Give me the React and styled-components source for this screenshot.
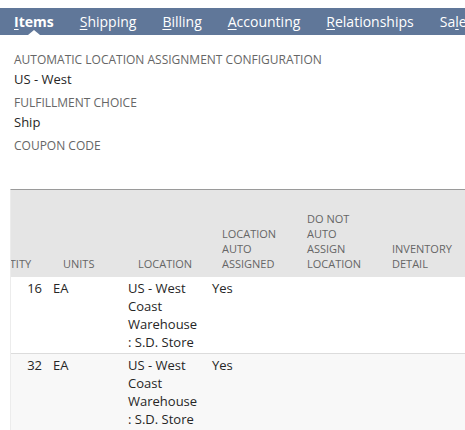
import React from 'react';
import styled, { createGlobalStyle } from 'styled-components';

const GlobalStyle = createGlobalStyle`
  html, body {
    margin: 0;
    padding: 0;
    background: #fff;
  }
  body {
    font-family: "Open Sans", Arial, sans-serif;
    color: #333;
  }
`;

const Page = styled.div`
  padding-top: 8px;
  width: 465px;
  height: 430px;
  overflow: hidden;
  box-sizing: border-box;
`;

const TabBar = styled.div`
  background-color: #607799;
  display: flex;
  height: 27px;
  padding-left: 1px;
  white-space: nowrap;
  overflow: hidden;
`;

const Tab = styled.div`
  color: #fff;
  font-size: 14px;
  font-weight: ${({ active }) => (active ? 700 : 400)};
  line-height: 27px;
  padding: 0 13px;
  position: relative;
  flex-shrink: 0;

  u {
    text-decoration-thickness: 1px;
    text-underline-offset: 2px;
  }

  &:after {
    content: '';
    display: ${({ active }) => (active ? 'block' : 'none')};
    position: absolute;
    left: 50%;
    bottom: 0;
    margin-left: -6px;
    border-left: 6px solid transparent;
    border-right: 6px solid transparent;
    border-bottom: 5px solid #fff;
  }
`;

const Fields = styled.div`
  padding: 17px 14px 0;
  height: 136px;
  box-sizing: border-box;
`;

const Field = styled.div`
  margin-bottom: 7px;
`;

const Label = styled.div`
  color: #666;
  font-size: 12px;
  line-height: 16px;
  text-transform: uppercase;
  margin-bottom: 2px;
`;

const Value = styled.div`
  color: #262626;
  font-size: 13px;
  line-height: 18px;
  min-height: 18px;
`;

const TableWrap = styled.div`
  margin-left: 10px;
  margin-top: 18px;
  overflow: hidden;
  border-left: 1px solid #ececec;
  border-top: 1px solid #9a9a9a;
`;

const Table = styled.table`
  border-collapse: collapse;
  table-layout: fixed;
  margin-left: -48px;
  width: 600px;
`;

const HeadCell = styled.th`
  background: #e5e5e5;
  color: #666;
  font-size: 11px;
  font-weight: 400;
  line-height: 15px;
  text-align: left;
  text-transform: uppercase;
  vertical-align: bottom;
  padding: 0 5px 6px 15px;
  height: 81px;
`;

const Row = styled.tr`
  background: ${({ alt }) => (alt ? '#f8f8f8' : '#fff')};
  border-bottom: 1px solid #dcdcdc;
`;

const Cell = styled.td`
  color: #262626;
  font-size: 13px;
  line-height: 18px;
  vertical-align: top;
  padding: 2px ${({ right }) => (right ? '6px' : '7px')} 2px ${({ right }) => (right ? '0' : '5px')};
  text-align: ${({ right }) => (right ? 'right' : 'left')};
`;

const tabs = [
  { key: 'I', rest: 'tems', active: true },
  { key: 'S', rest: 'hipping' },
  { key: 'B', rest: 'illing' },
  { key: 'A', rest: 'ccounting' },
  { key: 'R', rest: 'elationships' },
  { pre: 'Sa', key: 'l', rest: 'es' },
];

const rows = [
  { qty: 16, units: 'EA', location: 'US - West Coast Warehouse : S.D. Store', auto: 'Yes' },
  { qty: 32, units: 'EA', location: 'US - West Coast Warehouse : S.D. Store', auto: 'Yes' },
];

const App = () => (
  <Page>
    <GlobalStyle />
    <TabBar>
      {tabs.map(t => (
        <Tab key={t.rest} active={t.active}>
          {t.pre}
          <u>{t.key}</u>
          {t.rest}
        </Tab>
      ))}
    </TabBar>
    <Fields>
      <Field>
        <Label>Automatic Location Assignment Configuration</Label>
        <Value>US - West</Value>
      </Field>
      <Field>
        <Label>Fulfillment Choice</Label>
        <Value>Ship</Value>
      </Field>
      <Field>
        <Label>Coupon Code</Label>
        <Value />
      </Field>
    </Fields>
    <TableWrap>
      <Table>
        <colgroup>
          <col style={{ width: 85 }} />
          <col style={{ width: 75 }} />
          <col style={{ width: 84 }} />
          <col style={{ width: 85 }} />
          <col style={{ width: 85 }} />
          <col style={{ width: 85 }} />
          <col style={{ width: 101 }} />
        </colgroup>
        <thead>
          <tr>
            <HeadCell>Quantity</HeadCell>
            <HeadCell>Units</HeadCell>
            <HeadCell>Location</HeadCell>
            <HeadCell>Location Auto Assigned</HeadCell>
            <HeadCell>Do Not Auto Assign Location</HeadCell>
            <HeadCell>Inventory Detail</HeadCell>
            <HeadCell />
          </tr>
        </thead>
        <tbody>
          {rows.map((r, i) => (
            <Row key={r.qty} alt={i % 2 === 1}>
              <Cell right>{r.qty}</Cell>
              <Cell>{r.units}</Cell>
              <Cell>{r.location}</Cell>
              <Cell>{r.auto}</Cell>
              <Cell />
              <Cell />
              <Cell />
            </Row>
          ))}
        </tbody>
      </Table>
    </TableWrap>
  </Page>
);

export default App;
